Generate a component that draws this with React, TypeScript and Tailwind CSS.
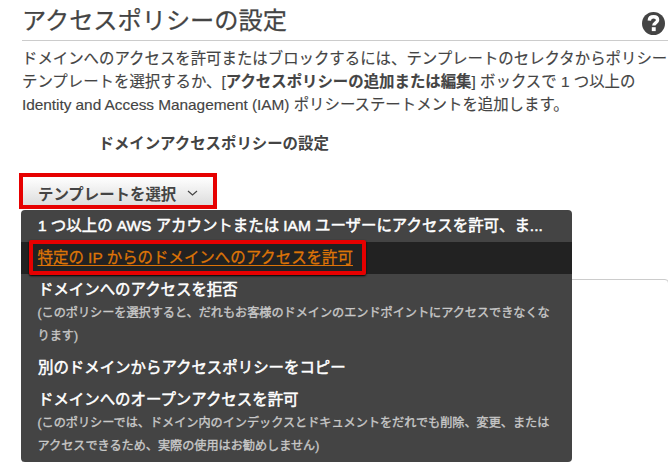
import type { ReactNode } from "react";

const Line = ({ className = "", children }: { className?: string; children: ReactNode }) => (
  <div className={`whitespace-nowrap ${className}`}>{children}</div>
);

const MenuTitle = ({ children }: { children: ReactNode }) => (
  <div className="h-8 whitespace-nowrap pl-[17px] text-[15.43px] leading-[32px] text-white [-webkit-text-stroke:0.5px_white]">
    {children}
  </div>
);

const MenuNote = ({ children }: { children: ReactNode }) => (
  <div className="h-[23px] whitespace-nowrap pl-[16.5px] text-[12.13px] leading-[24px] text-[#c8c8c8] [-webkit-text-stroke:0.35px_#c8c8c8]">
    {children}
  </div>
);

export default function App() {
  return (
    <div className="relative h-[462px] w-[668px] overflow-hidden bg-white font-['Liberation_Sans','Noto_Sans_CJK_JP',sans-serif] text-[#444444]">
      <header className="ml-[22px] flex h-[41px] justify-between border-b border-[#cccccc]">
        <h1 className="text-[24.2px] leading-[41px] whitespace-nowrap [-webkit-text-stroke:0.25px_#444]">アクセスポリシーの設定</h1>
        <svg className="mt-3 mr-[3px] h-[23px] w-[23px] shrink-0" viewBox="0 0 23 23">
          <circle cx="11.5" cy="11.5" r="11.5" fill="#444" />
          <path d="M7.3 8.6C7.4 5.9 9.2 4.8 11.6 4.8c2.3 0 4 1.2 4 3.2 0 2.9-3.8 2.9-3.8 5.6" fill="none" stroke="#fff" strokeWidth="3.4" />
          <rect x="9.8" y="15.2" width="3.9" height="3.9" fill="#fff" />
        </svg>
      </header>

      <section className="ml-[22px] pt-[6px] text-[15.42px] leading-[23px] [-webkit-text-stroke:0.15px_#444]">
        <Line>ドメインへのアクセスを許可またはブロックするには、テンプレートのセレクタからポリシー</Line>
        <Line>
          テンプレートを選択するか、[<b>アクセスポリシーの追加または編集</b>] ボックスで 1 つ以上の
        </Line>
        <Line>
          <span className="tracking-[-0.04px]">Identity and Access Management (IAM) </span>
          ポリシーステートメントを追加します。
        </Line>
      </section>

      <h2 className="mt-[16px] ml-[98.5px] h-[23px] text-[15.42px] leading-[23px] font-bold whitespace-nowrap">
        ドメインアクセスポリシーの設定
      </h2>

      <div className="mt-[18px] ml-[19px] flex h-[36px] w-[198px] items-center border-4 border-[#e60000] bg-linear-to-b from-white to-[#dddddd] pt-[7px] pl-[15px]">
        <span className="text-[15.42px] leading-[22px] font-bold whitespace-nowrap">テンプレートを選択</span>
        <svg className="mb-[4px] ml-[11px] h-[8px] w-[11px]" viewBox="0 0 11 8">
          <path d="M1 2l4.5 4L10 2" fill="none" stroke="#444" strokeWidth="1.2" />
        </svg>
      </div>

      <div className="-mr-px mt-[70px] ml-[22px] h-[200px] rounded-[4px] border border-[#cccccc]" />

      <div className="absolute top-[210px] left-[21px] h-[252px] w-[551px] rounded-[4px] bg-[#444444]">
        <MenuTitle>1 つ以上の AWS アカウントまたは IAM ユーザーにアクセスを許可、ま...</MenuTitle>
        <div className="flex h-8 items-start bg-[#222222] pl-[8px]">
          <div className="-mt-[2px] h-[35px] w-[337px] shrink-0 rounded-[2px] border-4 border-[#e60000] pl-[4.5px] text-[15.45px] leading-[27px] whitespace-nowrap text-[#dd7407] shadow-[0_1px_2px_#000] [-webkit-text-stroke:0.3px_#dd7407]">
            <span className="underline decoration-1 underline-offset-[2px]">特定の IP からのドメインへのアクセスを許可</span>
          </div>
        </div>
        <MenuTitle>ドメインへのアクセスを拒否</MenuTitle>
        <div className="-mt-[5px]">
          <MenuNote>(このポリシーを選択すると、だれもお客様のドメインのエンドポイントにアクセスできなくな</MenuNote>
          <MenuNote>ります)</MenuNote>
        </div>
        <div className="mt-[5px]">
          <MenuTitle>別のドメインからアクセスポリシーをコピー</MenuTitle>
        </div>
        <MenuTitle>ドメインへのオープンアクセスを許可</MenuTitle>
        <div className="-mt-[5px]">
          <MenuNote>(このポリシーでは、ドメイン内のインデックスとドキュメントをだれでも削除、変更、または</MenuNote>
          <MenuNote>アクセスできるため、実際の使用はお勧めしません)</MenuNote>
        </div>
      </div>
    </div>
  );
}
